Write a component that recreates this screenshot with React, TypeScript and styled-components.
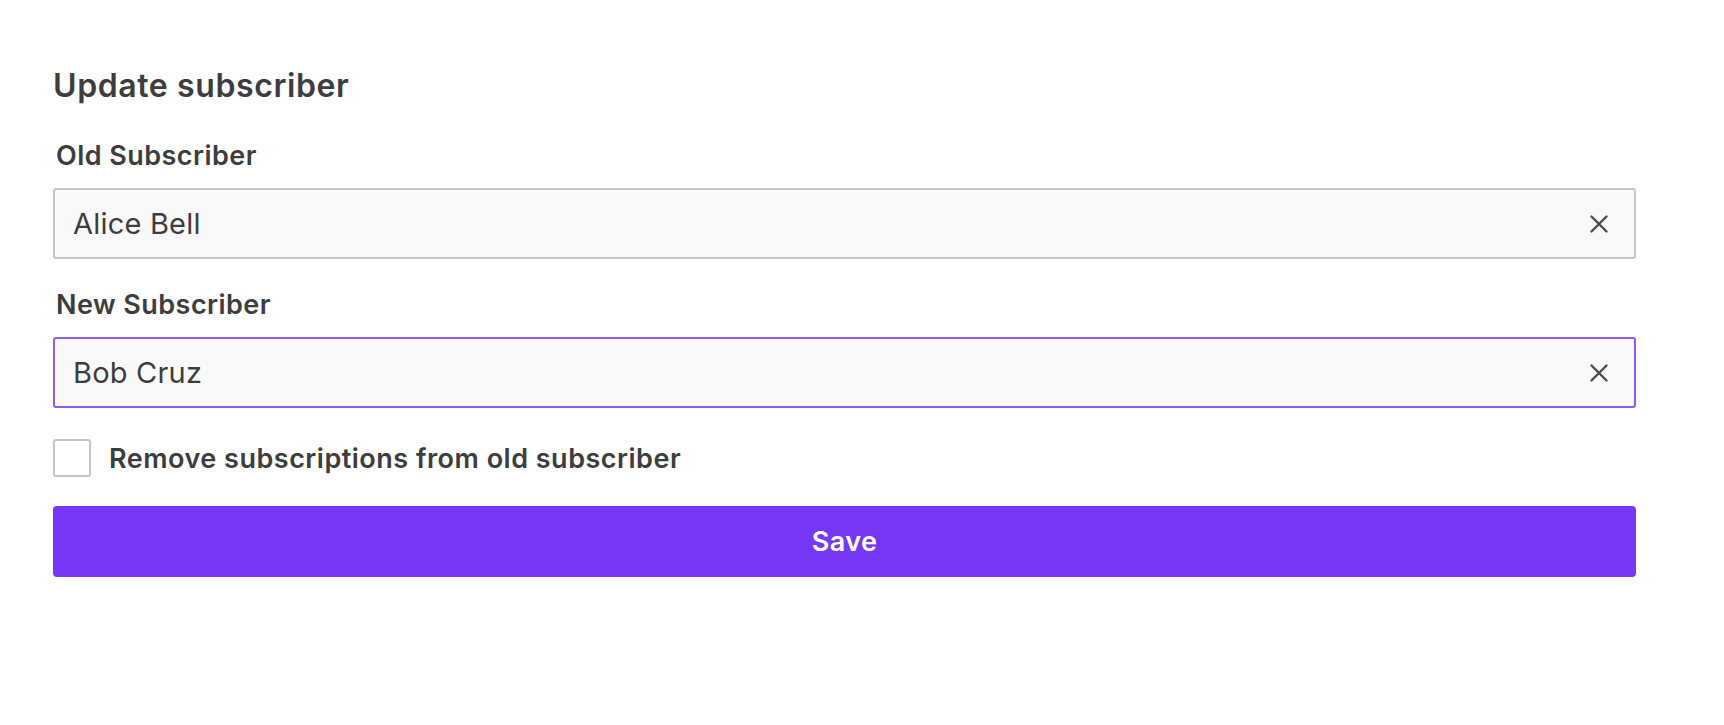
import React, { FC, useState } from "react";
import styled, { createGlobalStyle } from "styled-components";

const GlobalStyle = createGlobalStyle`
  body {
    margin: 0;
    background: #ffffff;
    font-family: Inter, "Noto Sans", "Liberation Sans", sans-serif;
    color: #3d3d3f;
  }
`;

const Page = styled.div`
  padding: 68px 88px 0 53px;
`;

const Title = styled.h2`
  margin: 0 0 37px;
  font-size: 32px;
  line-height: 36px;
  letter-spacing: 0.6px;
  font-weight: 600;
  color: #3d3d3f;
`;

const Field = styled.div`
  display: flex;
  flex-direction: column;
  gap: 17px;
  margin-bottom: 31px;
`;

const Label = styled.label`
  padding-left: 3px;
  font-size: 27px;
  line-height: 30px;
  letter-spacing: 0.45px;
  font-weight: 600;
  color: #3d3d3f;
`;

const InputBox = styled.div<{ $focused?: boolean }>`
  display: flex;
  align-items: center;
  height: 71px;
  box-sizing: border-box;
  padding: 0 25px 0 18px;
  background: #f9f9f9;
  border: 2px solid ${(p) => (p.$focused ? "#8a5cf7" : "#c6c6c8")};
  border-radius: 3px;
`;

const Input = styled.input`
  flex: 1;
  min-width: 0;
  border: none;
  outline: none;
  background: transparent;
  padding: 0;
  font-family: inherit;
  font-size: 29px;
  letter-spacing: 0.2px;
  color: #3d3d3f;
`;

const ClearButton = styled.button`
  display: flex;
  align-items: center;
  justify-content: center;
  width: 20px;
  height: 20px;
  padding: 0;
  border: none;
  background: none;
  color: #4a4a4c;
  cursor: pointer;
`;

const CheckRow = styled.label`
  display: flex;
  align-items: center;
  gap: 18px;
  margin-bottom: 29px;
  font-size: 27px;
  letter-spacing: 0.5px;
  font-weight: 600;
  color: #3d3d3f;
  cursor: pointer;
`;

const CheckBox = styled.span`
  flex: none;
  width: 38px;
  height: 38px;
  box-sizing: border-box;
  border: 2px solid #c6c6c8;
  border-radius: 3px;
  background: #ffffff;
`;

const SaveButton = styled.button`
  display: block;
  width: 100%;
  height: 71px;
  border: none;
  border-radius: 4px;
  background: #7638f6;
  color: #ffffff;
  font-family: inherit;
  font-size: 27px;
  letter-spacing: 0.4px;
  font-weight: 600;
  cursor: pointer;
`;

const CloseIcon: FC = () => (
  <svg width="20" height="20" viewBox="0 0 20 20" fill="none">
    <path
      d="M2.5 2.5L17.5 17.5M17.5 2.5L2.5 17.5"
      stroke="currentColor"
      strokeWidth="2.4"
      strokeLinecap="round"
    />
  </svg>
);

const SubscriberField: FC<{
  label: string;
  value: string;
  focused?: boolean;
  onChange: (v: string) => void;
}> = ({ label, value, focused, onChange }) => (
  <Field>
    <Label>{label}</Label>
    <InputBox $focused={focused}>
      <Input value={value} onChange={(e) => onChange(e.target.value)} />
      <ClearButton onClick={() => onChange("")}>
        <CloseIcon />
      </ClearButton>
    </InputBox>
  </Field>
);

export default function App() {
  const [oldSub, setOldSub] = useState("Alice Bell");
  const [newSub, setNewSub] = useState("Bob Cruz");
  return (
    <Page>
      <GlobalStyle />
      <Title>Update subscriber</Title>
      <SubscriberField label="Old Subscriber" value={oldSub} onChange={setOldSub} />
      <SubscriberField label="New Subscriber" value={newSub} focused onChange={setNewSub} />
      <CheckRow>
        <CheckBox />
        Remove subscriptions from old subscriber
      </CheckRow>
      <SaveButton>Save</SaveButton>
    </Page>
  );
}
